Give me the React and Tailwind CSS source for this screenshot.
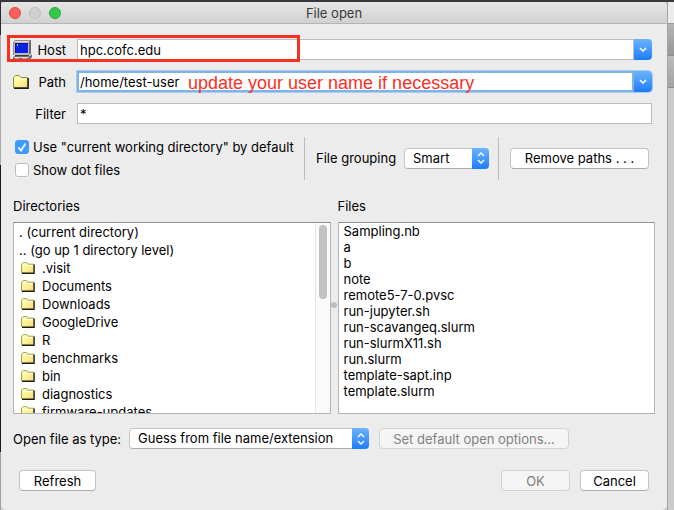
const directories = ['.visit', 'Documents', 'Downloads', 'GoogleDrive', 'R', 'benchmarks', 'bin', 'diagnostics', 'firmware-updates'];

const files = [
  'Sampling.nb',
  'a',
  'b',
  'note',
  'remote5-7-0.pvsc',
  'run-jupyter.sh',
  'run-scavangeq.slurm',
  'run-slurmX11.sh',
  'run.slurm',
  'template-sapt.inp',
  'template.slurm',
];

function FolderIcon({ className }) {
  return (
    <svg viewBox="0 0 16 14" className={className} aria-hidden="true">
      <defs>
        <linearGradient id="folder" x1="0" y1="0" x2="1" y2="1">
          <stop offset="0" stopColor="#ffffa8" />
          <stop offset="0.6" stopColor="#fbf092" />
          <stop offset="1" stopColor="#f2cf96" />
        </linearGradient>
      </defs>
      <path d="M0.500 12.500V2.500L2.500 0.500H6L8 2.500H14.500V12.500Z" fill="url(#folder)" stroke="#8c8c30" />
      <path d="M1.500 4H13.500" stroke="#fffff0" />
      <path d="M1 13.200H15.200V3" fill="none" stroke="#1c1c10" strokeWidth="1.400" />
    </svg>
  );
}

function ComputerIcon({ className }) {
  return (
    <svg viewBox="0 0 20 20" className={className} aria-hidden="true">
      <path d="M0 2L2 0H18V13L16 15H0Z" fill="#8e8e8e" />
      <path d="M1 2L2 1H17L16 2Z" fill="#dcdcdc" />
      <path d="M1 2H16V15H1Z" fill="#bcbcbc" />
      <path d="M16 2L18 0V13L16 15Z" fill="#6a6a6a" />
      <path d="M2 3H15V13H2Z" fill="#15156e" />
      <path d="M3 4H15V13H3Z" fill="#0a22e8" />
      <path d="M4 4H5V6H4Z" fill="#50f0c0" />
      <path d="M2 15H16V16H2Z" fill="#3c3c3c" />
      <path d="M0 17L2 16H17L19 14V17L17 20H0Z" fill="#6e6e6e" />
      <path d="M1 17H16V18H1Z" fill="#d6d6d6" />
      <path d="M2 18H6V19H2ZM9 18H14V19H9Z" fill="#a8a8a8" />
    </svg>
  );
}

function ChevronDown() {
  return (
    <svg viewBox="0 0 8 5" className="h-[5px] w-2" fill="none" stroke="#fff" strokeWidth="1.500" aria-hidden="true">
      <path d="M1 1L4 4L7 1" />
    </svg>
  );
}

function ComboBox({ id, value, focused, children }) {
  return (
    <div
      className={
        'relative flex h-[21px] min-w-0 flex-1 rounded-r bg-white ' +
        (focused ? 'ring-1 ring-[#a9cdf2]' : '')
      }
    >
      <input
        id={id}
        defaultValue={value}
        className={
          'min-w-0 flex-1 outline-none ' +
          (focused ? 'border-2 border-[#7fb2e5] px-px' : 'border border-[#bcbcbc] px-[2px]')
        }
      />
      <button
        type="button"
        aria-label={'Show recent values for ' + id}
        className="flex w-[18px] items-center justify-center rounded-r bg-linear-to-b from-[#6bb3fa] to-[#1a7bfb]"
      >
        <ChevronDown />
      </button>
      {children}
    </div>
  );
}

function PopUp({ id, value, className }) {
  return (
    <div className={'relative h-[21px] ' + className}>
      <select
        id={id}
        defaultValue={value}
        className="h-full w-full appearance-none rounded border border-[#c6c6c6] border-b-[#adadad] bg-white pb-px pl-2 pr-5 leading-[18px] outline-none"
      >
        <option>{value}</option>
      </select>
      <span className="pointer-events-none absolute inset-y-0 right-0 flex w-[17px] items-center justify-center rounded-r bg-linear-to-b from-[#6bb3fa] to-[#1a7bfb]">
        <svg viewBox="0 0 8 12" className="h-3 w-2" fill="none" stroke="#fff" strokeWidth="1.400" aria-hidden="true">
          <path d="M1 4L4 1L7 4M1 8L4 11L7 8" />
        </svg>
      </span>
    </div>
  );
}

function PushButton({ className, disabled, children }) {
  return (
    <button
      type="button"
      disabled={disabled}
      className={
        'flex h-[21px] items-center justify-center whitespace-nowrap rounded border ' +
        (disabled
          ? 'border-[#d2d2d2] bg-[#f5f5f5] text-[#808080] '
          : 'border-[#c4c4c4] border-b-[#acacac] bg-white text-black ') +
        className
      }
    >
      {children}
    </button>
  );
}

function CheckBox({ label, checked }) {
  return (
    <label className="flex h-[23px] items-center gap-1">
      <span className="relative flex h-[14px] w-[14px]">
        <input
          type="checkbox"
          defaultChecked={checked}
          className="peer h-[14px] w-[14px] appearance-none rounded-[3px] border border-[#bdbdbd] bg-white checked:border-[#3b99fc] checked:bg-[#3f9bfb]"
        />
        <svg
          viewBox="0 0 14 14"
          className="pointer-events-none absolute inset-0 hidden peer-checked:block"
          fill="none"
          stroke="#fff"
          strokeWidth="1.700"
          aria-hidden="true"
        >
          <path d="M3.500 7.500L6 10.500L10.500 3.500" />
        </svg>
      </span>
      {label}
    </label>
  );
}

export default function App() {
  return (
    <div className="flex min-h-screen flex-col bg-[#cbcbcb] font-['Inter','Liberation_Sans',sans-serif] text-[13px] leading-4 text-black">
      <div className="h-[2px] bg-[#37383e]" />
      <div className="flex flex-1">
        <div className="flex w-px flex-col" aria-hidden="true">
          <div className="h-[33px] bg-[#2b2b30]" />
          <div className="h-[130px] bg-[#aaa]" />
          <div className="flex-1 bg-[#1d1a1c]" />
          <div className="h-[58px] bg-[#a0a0a0]" />
        </div>

        <main className="min-w-0 flex-1 rounded-[5px] bg-[#ececec]">
          <header className="grid h-[22px] grid-cols-[1fr_auto_1fr] items-center rounded-t-[5px] border-b border-[#b4b4b4] bg-linear-to-b from-[#e6e6e6] to-[#d1d1d1] px-2">
            <div className="flex gap-2">
              <button type="button" aria-label="Close" className="h-3 w-3 rounded-full border border-[#e2463f] bg-[#fc605b]" />
              <button type="button" aria-label="Minimize" className="h-3 w-3 rounded-full border border-[#bfbfbf] bg-[#d0d0d0]" />
              <button type="button" aria-label="Zoom" className="h-3 w-3 rounded-full border border-[#27a838] bg-[#34c84a]" />
            </div>
            <h1 className="text-[#3a3a3a]">File open</h1>
          </header>

          <form className="flex flex-col px-3 pt-[15px]" onSubmit={(e) => e.preventDefault()}>
            <div className="flex flex-col gap-[11px] pr-[3px]">
              <div className="relative flex items-center gap-[11px]">
                <label htmlFor="host" className="flex w-[53px] items-center justify-between">
                  <ComputerIcon className="h-5 w-5" />
                  Host
                </label>
                <ComboBox id="host" value="hpc.cofc.edu" />
                <span className="pointer-events-none absolute -left-[6px] -top-[4px] h-[27px] w-[293px] border-[3px] border-[#f8301f]" />
              </div>
              <div className="flex items-center gap-[11px]">
                <label htmlFor="path" className="flex w-[53px] items-center justify-between">
                  <FolderIcon className="h-[14px] w-4" />
                  Path
                </label>
                <ComboBox id="path" value="/home/test-user" focused>
                  <span className="pointer-events-none absolute left-[111px] top-px whitespace-nowrap font-['Liberation_Sans',Arial,sans-serif] text-[18px] leading-[22px] text-[#f8301f]">
                    update your user name if necessary
                  </span>
                </ComboBox>
              </div>
              <div className="flex items-center gap-[11px]">
                <label htmlFor="filter" className="w-[53px] text-right">
                  Filter
                </label>
                <input id="filter" defaultValue="*" className="h-[21px] min-w-0 flex-1 border border-[#bcbcbc] bg-white px-[2px] outline-none" />
              </div>
            </div>

            <div className="mt-[11px] flex items-center">
              <div className="flex flex-1 flex-col pl-[2px]">
                <CheckBox label={'Use "current working directory" by default'} checked />
                <CheckBox label="Show dot files" />
              </div>
              <div className="flex h-[43px] items-center gap-[10px] border-x border-[#bdbdbd] pl-[11px] pr-[9px]">
                <label htmlFor="grouping" className="w-[78px] whitespace-nowrap">
                  File grouping
                </label>
                <PopUp id="grouping" value="Smart" className="w-[85px]" />
              </div>
              <PushButton className="ml-[11px] mr-[6px] w-[139px]">Remove paths . . .</PushButton>
            </div>

            <div className="mt-[17px] flex">
              <section className="flex min-w-0 flex-1 flex-col gap-2">
                <h2>Directories</h2>
                <div className="flex h-[192px] overflow-hidden border border-[#b4b4b4] border-t-[#909090] bg-white">
                  <ul className="min-w-0 flex-1 pl-[5px] leading-[18px]">
                    <li>. (current directory)</li>
                    <li>.. (go up 1 directory level)</li>
                    {directories.map((name) => (
                      <li key={name} className="flex items-center gap-[7px] pl-[2px]">
                        <FolderIcon className="h-3 w-[14px]" />
                        {name}
                      </li>
                    ))}
                  </ul>
                  <div className="w-[15px] border-l border-[#e6e6e6] bg-[#fafafa] px-[3px] pt-[2px]">
                    <div className="h-[74px] rounded-full bg-[#c2c2c2]" />
                  </div>
                </div>
              </section>
              <div className="mt-[24px] flex w-[7px] flex-col items-center pt-[80px]">
                <span className="h-[6px] w-[6px] rounded-full bg-[#bdbdbd]" />
              </div>
              <section className="flex min-w-0 flex-1 flex-col gap-2">
                <h2>Files</h2>
                <ul className="h-[192px] overflow-hidden border border-[#b4b4b4] border-t-[#909090] bg-white pl-[5px]">
                  {files.map((name) => (
                    <li key={name}>{name}</li>
                  ))}
                </ul>
              </section>
            </div>

            <div className="mt-[14px] flex items-center">
              <label htmlFor="type" className="w-[116px] whitespace-nowrap">
                Open file as type:
              </label>
              <PopUp id="type" value="Guess from file name/extension" className="w-[240px]" />
              <PushButton disabled className="ml-[10px] w-[190px]">
                Set default open options...
              </PushButton>
            </div>

            <div className="mt-[21px] flex gap-[10px] pb-[19px] pl-[6px] pr-[6px]">
              <PushButton className="mr-auto w-[77px]">Refresh</PushButton>
              <PushButton disabled className="w-[69px]">
                OK
              </PushButton>
              <PushButton className="w-[69px]">Cancel</PushButton>
            </div>
          </form>
        </main>

        <div className="flex w-[7px] flex-col border-l border-[#a4a4a4]" aria-hidden="true">
          <div className="h-[22px] border-b border-[#999] bg-[#ececec]" />
          <div className="h-[32px] border-b border-[#8c8c8c] bg-linear-to-b from-[#b4b4b4] to-[#989898]" />
          <div className="h-[32px] border-b border-[#8c8c8c] bg-linear-to-b from-[#bcbcbc] to-[#a4a4a4]" />
          <div className="flex-1 bg-[#cbcbcb]" />
        </div>
      </div>
    </div>
  );
}
